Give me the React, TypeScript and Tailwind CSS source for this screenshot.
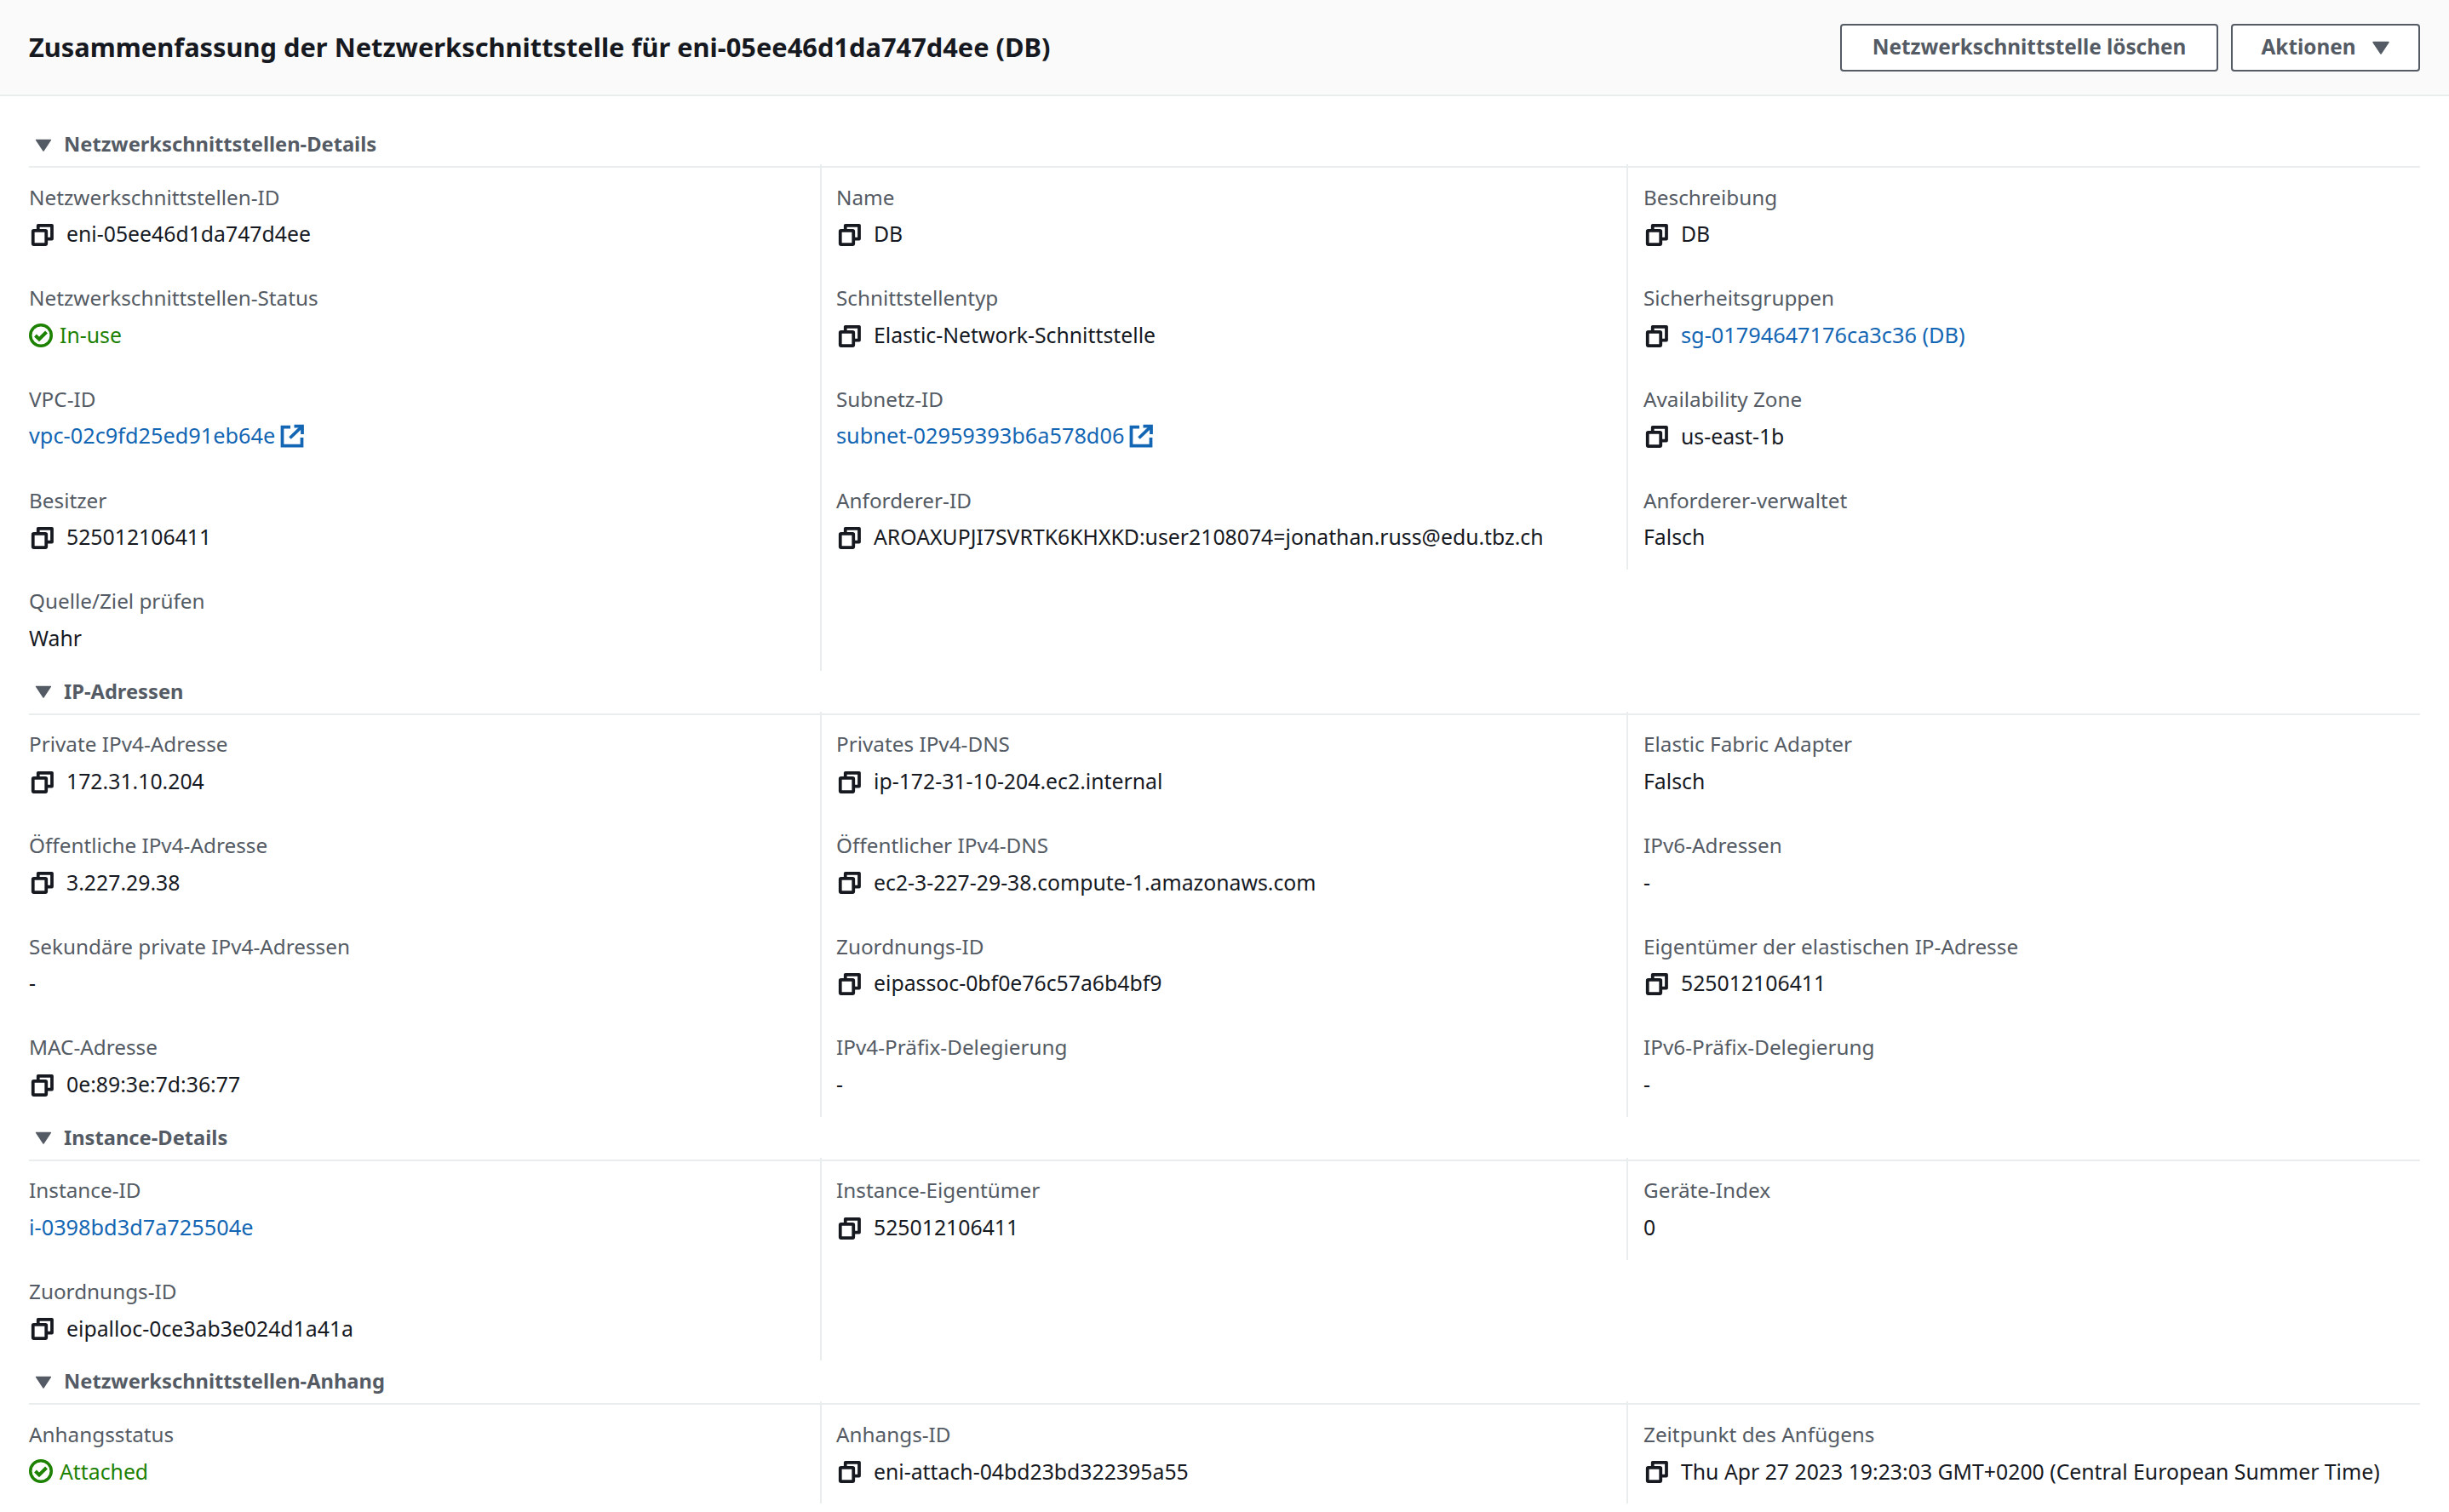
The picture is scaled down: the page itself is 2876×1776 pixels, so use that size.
import { ReactNode } from 'react';

type Kind = 'plain' | 'copy' | 'link' | 'copylink' | 'external' | 'status';

interface Item {
  label: string;
  value: string;
  kind: Kind;
}

interface Section {
  title: string;
  columns: Item[][];
  thirdShort?: boolean;
}

const sections: Section[] = [
  {
    title: 'Netzwerkschnittstellen-Details',
    thirdShort: true,
    columns: [
      [
        { label: 'Netzwerkschnittstellen-ID', value: 'eni-05ee46d1da747d4ee', kind: 'copy' },
        { label: 'Netzwerkschnittstellen-Status', value: 'In-use', kind: 'status' },
        { label: 'VPC-ID', value: 'vpc-02c9fd25ed91eb64e', kind: 'external' },
        { label: 'Besitzer', value: '525012106411', kind: 'copy' },
        { label: 'Quelle/Ziel prüfen', value: 'Wahr', kind: 'plain' },
      ],
      [
        { label: 'Name', value: 'DB', kind: 'copy' },
        { label: 'Schnittstellentyp', value: 'Elastic-Network-Schnittstelle', kind: 'copy' },
        { label: 'Subnetz-ID', value: 'subnet-02959393b6a578d06', kind: 'external' },
        { label: 'Anforderer-ID', value: 'AROAXUPJI7SVRTK6KHXKD:user2108074=jonathan.russ@edu.tbz.ch', kind: 'copy' },
      ],
      [
        { label: 'Beschreibung', value: 'DB', kind: 'copy' },
        { label: 'Sicherheitsgruppen', value: 'sg-01794647176ca3c36 (DB)', kind: 'copylink' },
        { label: 'Availability Zone', value: 'us-east-1b', kind: 'copy' },
        { label: 'Anforderer-verwaltet', value: 'Falsch', kind: 'plain' },
      ],
    ],
  },
  {
    title: 'IP-Adressen',
    columns: [
      [
        { label: 'Private IPv4-Adresse', value: '172.31.10.204', kind: 'copy' },
        { label: 'Öffentliche IPv4-Adresse', value: '3.227.29.38', kind: 'copy' },
        { label: 'Sekundäre private IPv4-Adressen', value: '-', kind: 'plain' },
        { label: 'MAC-Adresse', value: '0e:89:3e:7d:36:77', kind: 'copy' },
      ],
      [
        { label: 'Privates IPv4-DNS', value: 'ip-172-31-10-204.ec2.internal', kind: 'copy' },
        { label: 'Öffentlicher IPv4-DNS', value: 'ec2-3-227-29-38.compute-1.amazonaws.com', kind: 'copy' },
        { label: 'Zuordnungs-ID', value: 'eipassoc-0bf0e76c57a6b4bf9', kind: 'copy' },
        { label: 'IPv4-Präfix-Delegierung', value: '-', kind: 'plain' },
      ],
      [
        { label: 'Elastic Fabric Adapter', value: 'Falsch', kind: 'plain' },
        { label: 'IPv6-Adressen', value: '-', kind: 'plain' },
        { label: 'Eigentümer der elastischen IP-Adresse', value: '525012106411', kind: 'copy' },
        { label: 'IPv6-Präfix-Delegierung', value: '-', kind: 'plain' },
      ],
    ],
  },
  {
    title: 'Instance-Details',
    thirdShort: true,
    columns: [
      [
        { label: 'Instance-ID', value: 'i-0398bd3d7a725504e', kind: 'link' },
        { label: 'Zuordnungs-ID', value: 'eipalloc-0ce3ab3e024d1a41a', kind: 'copy' },
      ],
      [{ label: 'Instance-Eigentümer', value: '525012106411', kind: 'copy' }],
      [{ label: 'Geräte-Index', value: '0', kind: 'plain' }],
    ],
  },
  {
    title: 'Netzwerkschnittstellen-Anhang',
    columns: [
      [{ label: 'Anhangsstatus', value: 'Attached', kind: 'status' }],
      [{ label: 'Anhangs-ID', value: 'eni-attach-04bd23bd322395a55', kind: 'copy' }],
      [{ label: 'Zeitpunkt des Anfügens', value: 'Thu Apr 27 2023 19:23:03 GMT+0200 (Central European Summer Time)', kind: 'copy' }],
    ],
  },
];

function CopyIcon() {
  return (
    <svg viewBox="0 0 30 28" className="w-[30px] h-[28px] shrink-0 mr-[14px] text-[#16191f]" fill="none" stroke="currentColor" strokeWidth="3.75" strokeLinejoin="round">
      <rect x="4.75" y="9.75" width="15.5" height="16.25" rx="1" />
      <path d="M10.75 8V3.75H27V19.5H22" />
    </svg>
  );
}

function ExternalIcon() {
  return (
    <svg viewBox="0 0 28 28" className="w-[28px] h-[28px] shrink-0 ml-[6px] text-[#1366b3]" fill="none" stroke="currentColor" strokeWidth="3.75">
      <path d="M12 3.5H2.5v22h23V16" />
      <path d="M11.5 16.5L25 3.5" />
      <path d="M16.5 2.5h9.5v9.5" />
    </svg>
  );
}

function StatusIcon() {
  return (
    <svg viewBox="0 0 28 28" className="w-[28px] h-[28px] shrink-0 mr-[8px] text-[#1d8102]" fill="none" stroke="currentColor" strokeWidth="3.5">
      <circle cx="14" cy="14" r="12.25" />
      <path d="M7.5 14l4.5 4.5L20.5 10" strokeWidth="4" />
    </svg>
  );
}

function Caret({ className }: { className: string }) {
  return (
    <svg viewBox="0 0 20 16" className={className} fill="currentColor">
      <path d="M1 1.5h18L10 15z" stroke="currentColor" strokeWidth="1.5" strokeLinejoin="round" />
    </svg>
  );
}

function Value({ item }: { item: Item }) {
  let content: ReactNode = <span className="text-[#16191f]">{item.value}</span>;
  if (item.kind === 'copy') {
    content = (
      <>
        <CopyIcon />
        <span className="text-[#16191f]">{item.value}</span>
      </>
    );
  } else if (item.kind === 'link') {
    content = <span className="text-[#1366b3] text-[25.3px]">{item.value}</span>;
  } else if (item.kind === 'copylink') {
    content = (
      <>
        <CopyIcon />
        <span className="text-[#1366b3] text-[25.3px]">{item.value}</span>
      </>
    );
  } else if (item.kind === 'external') {
    content = (
      <>
        <span className="text-[#1366b3] text-[25.3px]">{item.value}</span>
        <ExternalIcon />
      </>
    );
  } else if (item.kind === 'status') {
    content = (
      <>
        <StatusIcon />
        <span className="text-[#1d8102]">{item.value}</span>
      </>
    );
  }
  return <div className="flex items-center h-[43px] pb-[1px] whitespace-nowrap text-[24.8px]">{content}</div>;
}

function Column({ items, className }: { items: Item[]; className: string }) {
  return (
    <div className={className}>
      {items.map((item) => (
        <div key={item.label} className="mb-[31.67px] last:mb-0">
          <div className="h-[44px] flex items-center text-[24.3px] text-[#545b64] whitespace-nowrap">{item.label}</div>
          <Value item={item} />
        </div>
      ))}
    </div>
  );
}

export default function App() {
  return (
    <div className="h-screen overflow-hidden bg-white text-[25px] font-['Noto_Sans',sans-serif]">
      {/* Header */}
      <header className="h-[113px] bg-[#fafafa] border-b-2 border-[#eaeded] flex items-center justify-between pl-[34px] pr-[34px]">
        <h1 className="text-[30.8px] font-bold text-[#16191f]">
          Zusammenfassung der Netzwerkschnittstelle für eni-05ee46d1da747d4ee (DB)
        </h1>
        <div className="flex gap-[15px] text-[24.3px]">
          <button className="w-[444px] h-[56px] bg-white border-2 border-[#545b64] rounded-[4px] text-[#545b64] font-bold">
            Netzwerkschnittstelle löschen
          </button>
          <button className="w-[222px] h-[56px] bg-white border-2 border-[#545b64] rounded-[4px] text-[#545b64] font-bold flex items-center justify-center gap-[20px]">
            Aktionen
            <Caret className="w-[20px] h-[16px]" />
          </button>
        </div>
      </header>

      {/* Sections */}
      <main className="px-[34px] pt-[32px]">
        {sections.map((section) => (
          <section key={section.title}>
            <div className="h-[52px] flex items-center gap-[14px] pl-[7px] border-b-2 border-[#eaeded] text-[23.7px] text-[#545b64] font-bold">
              <Caret className="w-[20px] h-[15px]" />
              {section.title}
            </div>
            <div className="grid grid-cols-[929px_947px_1fr]">
              <Column items={section.columns[0]} className="pt-[13px] pb-[16px]" />
              <Column items={section.columns[1]} className="-mt-[4px] pt-[17px] pb-[16px] pl-[17px] border-l-2 border-[#eaeded]" />
              <Column
                items={section.columns[2]}
                className={`-mt-[4px] pt-[17px] pb-[16px] pl-[18px] border-l-2 border-[#eaeded] ${section.thirdShort ? 'self-start' : ''}`}
              />
            </div>
          </section>
        ))}
      </main>
    </div>
  );
}
